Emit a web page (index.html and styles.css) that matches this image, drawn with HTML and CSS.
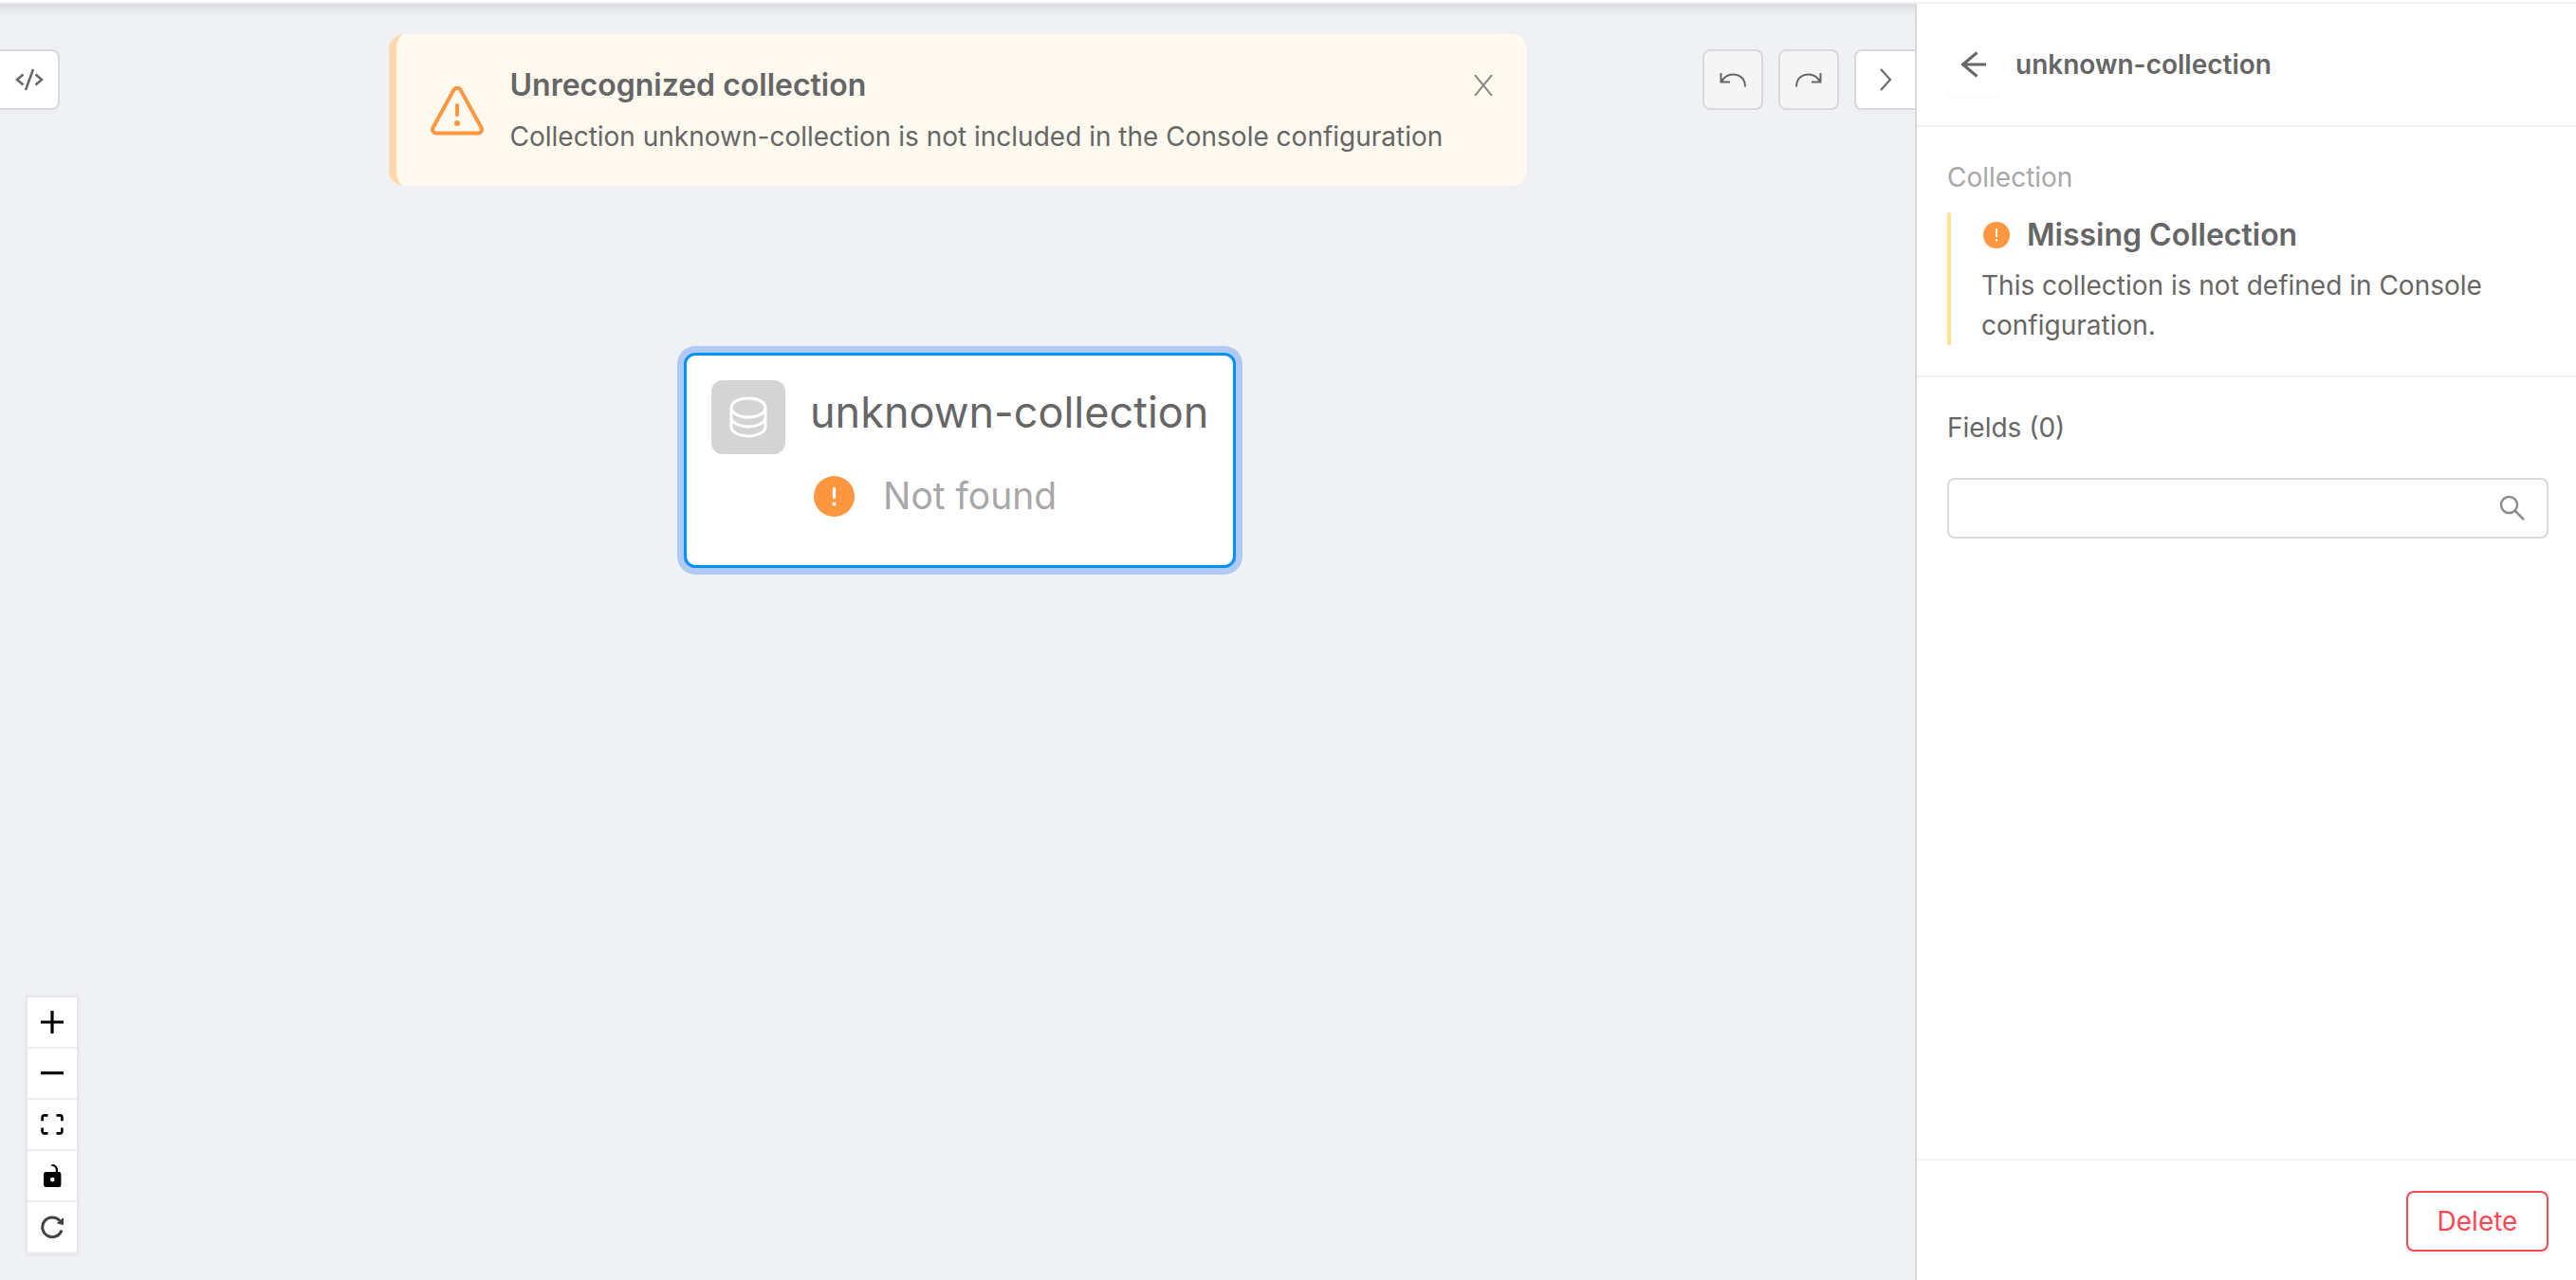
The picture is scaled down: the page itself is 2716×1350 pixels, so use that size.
FILE: index.html
```html
<!DOCTYPE html>
<html lang="en">
<head>
<meta charset="utf-8">
<title>Collections</title>
<link rel="stylesheet" href="styles.css">
</head>
<body>
<div class="topbar"></div>
<div class="workspace">
  <main class="canvas">
    <button class="tool tool-code" type="button" aria-label="Show code">
      <svg width="30" height="24" viewBox="0 0 30 24"><path stroke-width="2.500" d="M8.500 6.500 2 12l6.500 5.500M21.500 6.500l6.500 5.500-6.500 5.500M19 1l-8 22"/></svg>
    </button>

    <section class="alert" role="alert">
      <svg class="alert-icon" width="56" height="52" viewBox="0 0 56 52"><path d="M24.600 3.600a4 4 0 0 1 6.800 0L53.400 43.500a4 4 0 0 1-3.400 6H6a4 4 0 0 1-3.400-6z"/><path d="M28 20v10"/><circle cx="28" cy="39" r="3"/></svg>
      <div class="alert-body">
        <h2 class="alert-title">Unrecognized collection</h2>
        <p class="alert-text">Collection unknown-collection is not included in the Console configuration</p>
      </div>
      <button class="alert-close" type="button" aria-label="Close">
        <svg width="20" height="22" viewBox="0 0 20 22"><path d="M1 0l18 22M19 0 1 22"/></svg>
      </button>
    </section>

    <div class="toolbar">
      <button class="tool" type="button" aria-label="Undo" disabled>
        <svg width="28" height="16" viewBox="0 0 28 16"><path d="M1.500 1v9.500H11M2 10C5 5 9 2.500 14 2.500C21.500 2.500 27 7 27 15.500"/></svg>
      </button>
      <button class="tool" type="button" aria-label="Redo" disabled>
        <svg width="28" height="16" viewBox="0 0 28 16"><path d="M26.500 1v9.500H17M26 10C23 5 19 2.500 14 2.500C6.500 2.500 1 7 1 15.500"/></svg>
      </button>
      <button class="tool tool-next" type="button" aria-label="Collapse panel">
        <svg width="14" height="24" viewBox="0 0 14 24"><path d="M2 1l10 11L2 23"/></svg>
      </button>
    </div>

    <article class="node">
      <span class="node-icon">
        <svg width="40" height="44" viewBox="0 0 40 44"><ellipse cx="20" cy="12" rx="18" ry="10"/><path d="M2 12v20c0 5.500 8 10 18 10s18-4.500 18-10V12M2 22c0 5.500 8 10 18 10s18-4.500 18-10"/></svg>
      </span>
      <h3 class="node-title">unknown-collection</h3>
      <p class="node-status">
        <svg width="43" height="43" viewBox="0 0 43 43"><circle cx="21.500" cy="21.500" r="21.500" fill="#ff9640"/><path d="M21.500 13.500v9" stroke="#fff" stroke-width="3.400" stroke-linecap="round"/><circle cx="21.500" cy="29.500" r="2.100" fill="#fff"/></svg>
        Not found
      </p>
    </article>

    <div class="controls">
      <button type="button" aria-label="Zoom in"><svg width="24" height="24" viewBox="0 0 32 32"><path d="M32 18.133H18.133V32h-4.266V18.133H0v-4.266h13.867V0h4.266v13.867H32z"/></svg></button>
      <button type="button" aria-label="Zoom out"><svg width="24" height="4" viewBox="0 0 32 5"><path d="M0 0h32v4.200H0z"/></svg></button>
      <button type="button" aria-label="Fit view"><svg width="24" height="22" viewBox="0 0 32 30"><path d="M3.692 4.630c0-.530.400-.938.939-.938h5.215V0H4.708C2.130 0 0 2.054 0 4.630v5.216h3.692V4.631zM27.354 0h-5.200v3.692h5.170c.530 0 .984.400.984.939v5.215H32V4.631A4.624 4.624 0 0 0 27.354 0zm.954 24.830c0 .532-.400.940-.939.940h-5.215v3.768h5.215c2.577 0 4.631-2.130 4.631-4.707v-5.139h-3.692v5.139zm-23.677.940a.919.919 0 0 1-.939-.940v-5.138H0v5.139c0 2.577 2.130 4.707 4.708 4.707h5.138V25.770H4.631z"/></svg></button>
      <button type="button" aria-label="Toggle lock"><svg width="19" height="24" viewBox="0 0 25 32"><path d="M21.333 10.667H19.810V7.619C19.810 3.429 16.380 0 12.190 0c-4.114 1.828-1.370 2.133.305 2.438 1.676.305 4.420 2.590 4.420 5.181v3.048H3.047A3.056 3.056 0 0 0 0 13.714v15.238A3.056 3.056 0 0 0 3.048 32h18.285a3.056 3.056 0 0 0 3.048-3.048V13.714a3.056 3.056 0 0 0-3.048-3.047zM12.190 24.533a3.056 3.056 0 0 1-3.047-3.047 3.056 3.056 0 0 1 3.048-3.048 3.056 3.056 0 0 1 3.048 3.048 3.056 3.056 0 0 1-3.048 3.047z"/></svg></button>
      <button type="button" aria-label="Reload"><svg width="24" height="24" viewBox="0 0 24 24"><path d="M22 15.500A10.400 10.400 0 1 1 20 5.500" fill="none" stroke="#434343" stroke-width="3"/><path d="M17.500 8 23.500 3v6.500z" fill="#434343" stroke="#434343"/></svg></button>
    </div>
  </main>

  <aside class="panel">
    <header class="panel-header">
      <button class="back" type="button" aria-label="Back">
        <svg width="28" height="28" viewBox="0 0 28 28"><path d="M17.500 1.500 2.500 14l15 12.500M2 14h25"/></svg>
      </button>
      <h1 class="panel-title">unknown-collection</h1>
    </header>
    <section class="panel-section">
      <p class="label">Collection</p>
      <div class="callout">
        <h2 class="callout-title">
          <svg width="28" height="28" viewBox="0 0 28 28"><circle cx="14" cy="14" r="14" fill="#ff9640"/><path d="M14 7v9" stroke="#fff" stroke-width="2"/><path d="M14 18v2.500" stroke="#fff" stroke-width="2"/></svg>
          Missing Collection
        </h2>
        <p class="callout-text">This collection is not defined in Console configuration.</p>
      </div>
    </section>
    <section class="panel-fields">
      <label for="field-search">Fields (0)</label>
      <div class="search">
        <input id="field-search" type="text">
        <svg width="28" height="28" viewBox="0 0 28 28" stroke-width="2.500"><circle cx="10.500" cy="10.500" r="8.500"/><path d="M17 17l9 9"/></svg>
      </div>
    </section>
    <footer class="panel-footer">
      <button class="delete" type="button">Delete</button>
    </footer>
  </aside>
</div>
</body>
</html>
```

FILE: styles.css
```css
* { box-sizing: border-box; }

body {
  margin: 0;
  height: 100vh;
  display: flex;
  flex-direction: column;
  overflow: hidden;
  background: #fff;
  color: #666;
  font: 400 28px/42px Inter, "Liberation Sans", sans-serif;
}

h1, h2, h3, p { margin: 0; }

button {
  margin: 0;
  padding: 0;
  font: inherit;
  color: inherit;
  background: #fff;
  border: 0;
}

svg { display: block; flex: none; }

.topbar { height: 4px; border-bottom: 2px solid #f0f1f5; }

.workspace {
  flex: 1;
  min-height: 0;
  display: grid;
  grid-template-columns: minmax(0, 1fr) 697px;
}

/* Canvas */
.canvas {
  position: relative;
  overflow: hidden;
  background: #f0f1f5;
  box-shadow: inset 0 16px 16px -16px rgba(0, 0, 0, .18);
}

.tool {
  display: flex;
  align-items: center;
  justify-content: center;
  width: 64px;
  height: 64px;
  border: 2px solid #d9d9d9;
  border-radius: 8px;
  box-shadow: 0 4px 0 rgba(0, 0, 0, .016);
}
.tool svg { fill: none; stroke: #666; stroke-width: 2; }
.tool:disabled { background: #f5f5f5; box-shadow: none; }

.tool-code {
  position: absolute;
  left: 0;
  top: 48px;
  width: 63px;
  border-left: 0;
  border-radius: 0 8px 8px 0;
}

.toolbar {
  position: absolute;
  right: 0;
  top: 48px;
  display: flex;
  gap: 16px;
}
.tool-next { border-right: 0; border-radius: 8px 0 0 8px; }

.alert {
  width: 1200px;
  max-width: 100%;
  margin: 32px auto 0;
  padding: 32px 36px 30px;
  display: flex;
  align-items: center;
  gap: 28px;
  background: #fff9f0;
  border-left: 8px solid #ffd9ad;
  border-radius: 16px;
}
.alert-icon { fill: none; stroke: #ff9640; stroke-width: 4; stroke-linecap: round; }
.alert-icon circle { fill: #ff9640; stroke: none; }
.alert-body { flex: 1; display: grid; gap: 10px; line-height: 44px; }
.alert-title { font-size: 32px; font-weight: 600; line-height: 44px; }
.alert-close { align-self: flex-start; padding: 11px 0; background: none; }
.alert-close svg { fill: none; stroke: #8c8983; stroke-width: 2; }

.node {
  position: absolute;
  left: 721px;
  top: 368px;
  display: grid;
  grid-template-columns: 78px auto;
  gap: 14px 26px;
  padding: 26px;
  padding-bottom: 43px;
  background: #fff;
  border: 3px solid #0091ff;
  border-radius: 12px;
  box-shadow: 0 0 0 7px #b2c8f5;
}
.node-icon {
  display: flex;
  align-items: center;
  justify-content: center;
  height: 78px;
  background: #d4d4d4;
  border-radius: 12px;
}
.node-icon svg { fill: none; stroke: #fff; stroke-width: 3; }
.node-title { font-size: 45px; font-weight: 400; line-height: 68px; }
.node-status {
  grid-column: 2;
  display: flex;
  align-items: center;
  gap: 30px;
  padding-left: 4px;
  color: #a8a8a8;
  font-size: 39px;
  line-height: 60px;
}

.controls {
  position: absolute;
  left: 29px;
  bottom: 28px;
  width: 52px;
  box-shadow: 0 0 4px 2px rgba(0, 0, 0, .06);
}
.controls button {
  display: flex;
  align-items: center;
  justify-content: center;
  width: 100%;
  height: 54px;
  border-bottom: 2px solid #eee;
}

/* Side panel */
.panel {
  display: flex;
  flex-direction: column;
  min-height: 0;
  background: #fff;
  border-left: 2px solid #d9d9d9;
}
.panel-header, .panel-section, .panel-fields, .panel-footer { padding: 32px 29px 32px 32px; }
.panel-header, .panel-section { border-bottom: 2px solid #f0f1f5; }
.panel-header { display: flex; align-items: center; gap: 16px; }
.panel-title { font-size: 28px; font-weight: 600; line-height: 44px; }

.back {
  display: flex;
  align-items: center;
  justify-content: center;
  width: 56px;
  height: 64px;
  border-radius: 8px;
  box-shadow: 0 4px 0 rgba(0, 0, 0, .016);
}
.back svg { fill: none; stroke: #666; stroke-width: 3; }

.label { margin-bottom: 16px; color: #a8a8a8; }

.callout { position: relative; padding-left: 36px; }
.callout::before {
  content: "";
  position: absolute;
  inset: 0 auto 0 0;
  width: 4px;
  border-radius: 4px;
  background: #ffe08f;
}
.callout-title {
  display: flex;
  align-items: center;
  gap: 18px;
  margin-bottom: 8px;
  padding-left: 2px;
  font-size: 32px;
  font-weight: 600;
  line-height: 48px;
}

.panel-fields { flex: 1; }
.panel-fields label { display: block; margin-bottom: 32px; }
.search {
  display: flex;
  align-items: center;
  height: 64px;
  padding: 0 22px;
  border: 2px solid #d9d9d9;
  border-radius: 8px;
}
.search input {
  flex: 1;
  min-width: 0;
  padding: 0;
  border: 0;
  outline: 0;
  background: none;
  font: inherit;
  color: inherit;
}
.search svg { fill: none; stroke: #8c8c8c; }

.panel-footer {
  display: flex;
  justify-content: flex-end;
  padding-bottom: 30px;
  border-top: 2px solid #f0f1f5;
}
.delete {
  width: 150px;
  height: 64px;
  color: #ff4753;
  border: 2px solid #ff4753;
  border-radius: 8px;
  box-shadow: 0 4px 0 rgba(0, 0, 0, .04);
}
```
